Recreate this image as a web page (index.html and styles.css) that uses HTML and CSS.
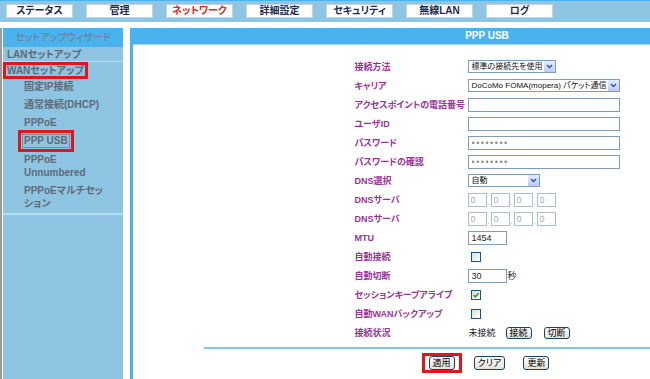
FILE: index.html
```html
<!DOCTYPE html>
<html>
<head>
  <title>PPP USB</title>
  <meta charset="utf-8" />
  <link rel="stylesheet" href="styles.css">
</head>
<body>
  <div class="topnav">
    <a class="tab">ステータス</a>
    <a class="tab">管理</a>
    <a class="tab tab-on">ネットワーク</a>
    <a class="tab">詳細設定</a>
    <a class="tab">セキュリティ</a>
    <a class="tab">無線LAN</a>
    <a class="tab">ログ</a>
  </div>

  <div class="frame">
    <div class="side">
      <div class="side-title">セットアップウィザード</div>
      <div class="side-item side-lan"><span>LANセットアップ</span></div>
      <div class="side-item side-wan"><span class="mark">WANセットアップ</span></div>
      <ul class="sub">
        <li>固定IP接続</li>
        <li>通常接続(DHCP)</li>
        <li>PPPoE</li>
        <li><span class="current mark">PPP USB</span></li>
        <li>PPPoE Unnumbered</li>
        <li>PPPoEマルチセッション</li>
      </ul>
    </div>

    <div class="main">
      <div class="main-title">PPP USB</div>

      <table class="form">
        <tr>
          <td class="label">接続方法</td>
          <td>
            <span class="sel sel-method"><span class="sel-text">標準の接続先を使用</span><span class="sel-btn"><svg width="7" height="5" viewBox="0 0 7 5"><path d="M1 1l2.5 2.5L6 1" fill="none" stroke="#3d5585" stroke-width="1.4"/></svg></span></span>
          </td>
        </tr>
        <tr>
          <td class="label">キャリア</td>
          <td>
            <span class="sel sel-carrier"><span class="sel-text">DoCoMo FOMA(mopera) パケット通信</span><span class="sel-btn"><svg width="7" height="5" viewBox="0 0 7 5"><path d="M1 1l2.5 2.5L6 1" fill="none" stroke="#3d5585" stroke-width="1.4"/></svg></span></span>
          </td>
        </tr>
        <tr>
          <td class="label">アクセスポイントの電話番号</td>
          <td><input class="txt" type="text"></td>
        </tr>
        <tr>
          <td class="label">ユーザID</td>
          <td><input class="txt" type="text"></td>
        </tr>
        <tr>
          <td class="label">パスワード</td>
          <td><input class="txt pw" type="password" value="12345678"></td>
        </tr>
        <tr>
          <td class="label">パスワードの確認</td>
          <td><input class="txt pw" type="password" value="12345678"></td>
        </tr>
        <tr>
          <td class="label">DNS選択</td>
          <td>
            <span class="sel sel-dns"><span class="sel-text">自動</span><span class="sel-btn"><svg width="7" height="5" viewBox="0 0 7 5"><path d="M1 1l2.5 2.5L6 1" fill="none" stroke="#3d5585" stroke-width="1.4"/></svg></span></span>
          </td>
        </tr>
        <tr>
          <td class="label">DNSサーバ</td>
          <td>
            <span class="ip"><input value="0" disabled><span class="dot">.</span><input value="0" disabled><span class="dot">.</span><input value="0" disabled><span class="dot">.</span><input value="0" disabled></span>
          </td>
        </tr>
        <tr>
          <td class="label">DNSサーバ</td>
          <td>
            <span class="ip"><input value="0" disabled><span class="dot">.</span><input value="0" disabled><span class="dot">.</span><input value="0" disabled><span class="dot">.</span><input value="0" disabled></span>
          </td>
        </tr>
        <tr>
          <td class="label">MTU</td>
          <td><input class="txt txt-short" type="text" value="1454"></td>
        </tr>
        <tr>
          <td class="label">自動接続</td>
          <td><span class="chk"></span></td>
        </tr>
        <tr>
          <td class="label">自動切断</td>
          <td><span class="inline"><input class="txt txt-short" type="text" value="30"><span class="unit">秒</span></span></td>
        </tr>
        <tr>
          <td class="label">セッションキープアライブ</td>
          <td><span class="chk"><svg width="8" height="8" viewBox="0 0 8 8"><path d="M1.5 4l1.8 1.8L6.6 2.2" fill="none" stroke="#21a121" stroke-width="1.6"/></svg></span></td>
        </tr>
        <tr>
          <td class="label">自動WANバックアップ</td>
          <td><span class="chk"></span></td>
        </tr>
        <tr>
          <td class="label">接続状況</td>
          <td>
            <span class="inline status">未接続<button class="btn btn-sm btn-first">接続</button><button class="btn btn-sm">切断</button></span>
          </td>
        </tr>
      </table>

      <hr class="rule">

      <div class="actions">
        <span class="mark wrap"><button class="btn">適用</button></span>
        <button class="btn">クリア</button>
        <button class="btn btn-last">更新</button>
      </div>
    </div>
  </div>
</body>
</html>
```

FILE: styles.css
```css
html, body {
  margin: 0;
  overflow: hidden;
  background: #fff;
}
body {
  font-family: "Liberation Sans", "Noto Sans CJK JP", sans-serif;
  font-feature-settings: "palt";
}
button, input {
  font-family: "Liberation Sans", "Noto Sans CJK JP", sans-serif;
  font-feature-settings: "palt";
}

/* top tabs */
.topnav {
  display: flex;
  align-items: flex-start;
  gap: 13px;
  height: 18px;
  padding: 3px 0 0 6px;
  border-top: 1px solid #4db3ec;
  background: #8ec5e3;
}
.tab {
  width: 67px;
  height: 14px;
  box-sizing: border-box;
  border: 1px solid #c5d5df;
  background: #fff;
  color: #1d2b57;
  font-size: 10px;
  font-weight: bold;
  line-height: 12px;
  text-align: center;
}
.tab-on {
  color: #e5251e;
}

/* frame */
.frame {
  display: flex;
  margin-top: 6px;
  height: calc(100vh - 28px);
  border-left: 2px solid #9c9c9c;
  padding-left: 1px;
  overflow: hidden;
}
.side {
  flex: 0 0 120px;
  margin-right: 7px;
  background: #8ec5e3;
  color: #5f6a74;
  font-size: 10px;
  font-weight: bold;
}
.side-title {
  height: 19px;
  line-height: 19px;
  background: #4ab3ee;
  color: #6c7985;
  font-weight: normal;
  text-align: center;
}
.side-item {
  padding-left: 3px;
}
.side-item span {
  display: inline-block;
  padding: 0 1px;
  line-height: 11px;
  vertical-align: middle;
}
.side-lan {
  height: 14px;
  line-height: 14px;
  border-bottom: 1px solid #b7dcef;
}
.side-wan {
  height: 16px;
  line-height: 16px;
}
.sub {
  list-style: none;
  margin: 0;
  padding: 0 12px 0 21px;
  border-bottom: 2px solid #b7dcef;
}
.sub li {
  line-height: 13px;
  padding: 2px 0 3px;
}
.current {
  display: inline-block;
  margin-left: -2px;
  padding: 0 1px;
  border: 1px solid #7d8c99;
  line-height: 12px;
  outline-offset: 1px;
}
.mark {
  outline: 3px solid #e3151a;
}

/* main area */
.main {
  flex: 0 0 708px;
  border-left: 3px solid #4ab3ee;
}
.main-title {
  height: 16px;
  line-height: 16px;
  background: #4ab3ee;
  border-bottom: 1px solid #a6d9f6;
  color: #fff;
  font-size: 10px;
  font-weight: bold;
  text-align: center;
}
.form {
  width: 265px;
  margin: 12px auto 0;
  border-collapse: collapse;
  font-size: 9px;
  color: #222;
}
.form td {
  height: 19px;
  padding: 0;
  vertical-align: middle;
}
.form .label {
  width: 113px;
  color: #993399;
  font-weight: bold;
  white-space: nowrap;
}
.txt {
  display: block;
  box-sizing: border-box;
  width: 152px;
  height: 14px;
  margin: 0;
  padding: 0 3px;
  border: 1px solid #7f9db9;
  font-size: 9px;
  color: #222;
  outline: none;
}
.txt-short {
  width: 39px;
}
.pw {
  color: #8a8a8a;
  letter-spacing: 1.5px;
}
.sel {
  display: flex;
  box-sizing: border-box;
  height: 13px;
  border: 1px solid #7f9db9;
  background: #fff;
}
.sel-method { width: 88px; }
.sel-carrier { width: 152px; }
.sel-dns { width: 72px; }
.sel-text {
  flex: 1;
  padding-left: 3px;
  font-size: 8px;
  line-height: 11px;
  white-space: nowrap;
  overflow: hidden;
  color: #111;
}
.sel-btn {
  display: flex;
  align-items: center;
  justify-content: center;
  width: 11px;
  background: linear-gradient(#e4ecfd, #b9cdf7);
}
.ip {
  display: flex;
  align-items: flex-end;
}
.ip input {
  box-sizing: border-box;
  width: 19px;
  height: 14px;
  margin: 0;
  padding: 0 2px;
  border: 1px solid #a9bfd6;
  background: #fff;
  color: #aaa;
  font-size: 9px;
}
.ip .dot {
  width: 4px;
  text-align: center;
  color: #999;
  font-size: 8px;
  line-height: 8px;
}
.chk {
  display: flex;
  align-items: center;
  justify-content: center;
  box-sizing: border-box;
  width: 10px;
  height: 10px;
  margin-left: 3px;
  border: 1px solid #1c5180;
  background: linear-gradient(135deg, #dcdcd7, #fff);
}
.inline {
  display: flex;
  align-items: center;
}
.unit {
  margin-left: 1px;
}
.status {
  padding-left: 1px;
}

/* buttons */
.btn {
  height: 14px;
  margin: 0;
  padding: 0 3px;
  border: 1px solid #1c3f6b;
  border-radius: 3px;
  background: linear-gradient(#fdfdfb, #e2e1da);
  color: #000;
  font-size: 9px;
  line-height: 12px;
}
.btn-sm {
  height: 12px;
  line-height: 10px;
}
.btn-first {
  margin-left: 10px;
}
.btn-sm + .btn-sm {
  margin-left: 12px;
}
.rule {
  width: 80%;
  height: 2px;
  margin: 5px auto 0;
  border: 0;
  background: #7fc6ef;
}
.actions {
  display: flex;
  justify-content: center;
  gap: 15px;
  margin-top: 7px;
}
.wrap {
  display: flex;
  padding: 0 4px;
}
.btn-last {
  margin-left: 3px;
}
```
